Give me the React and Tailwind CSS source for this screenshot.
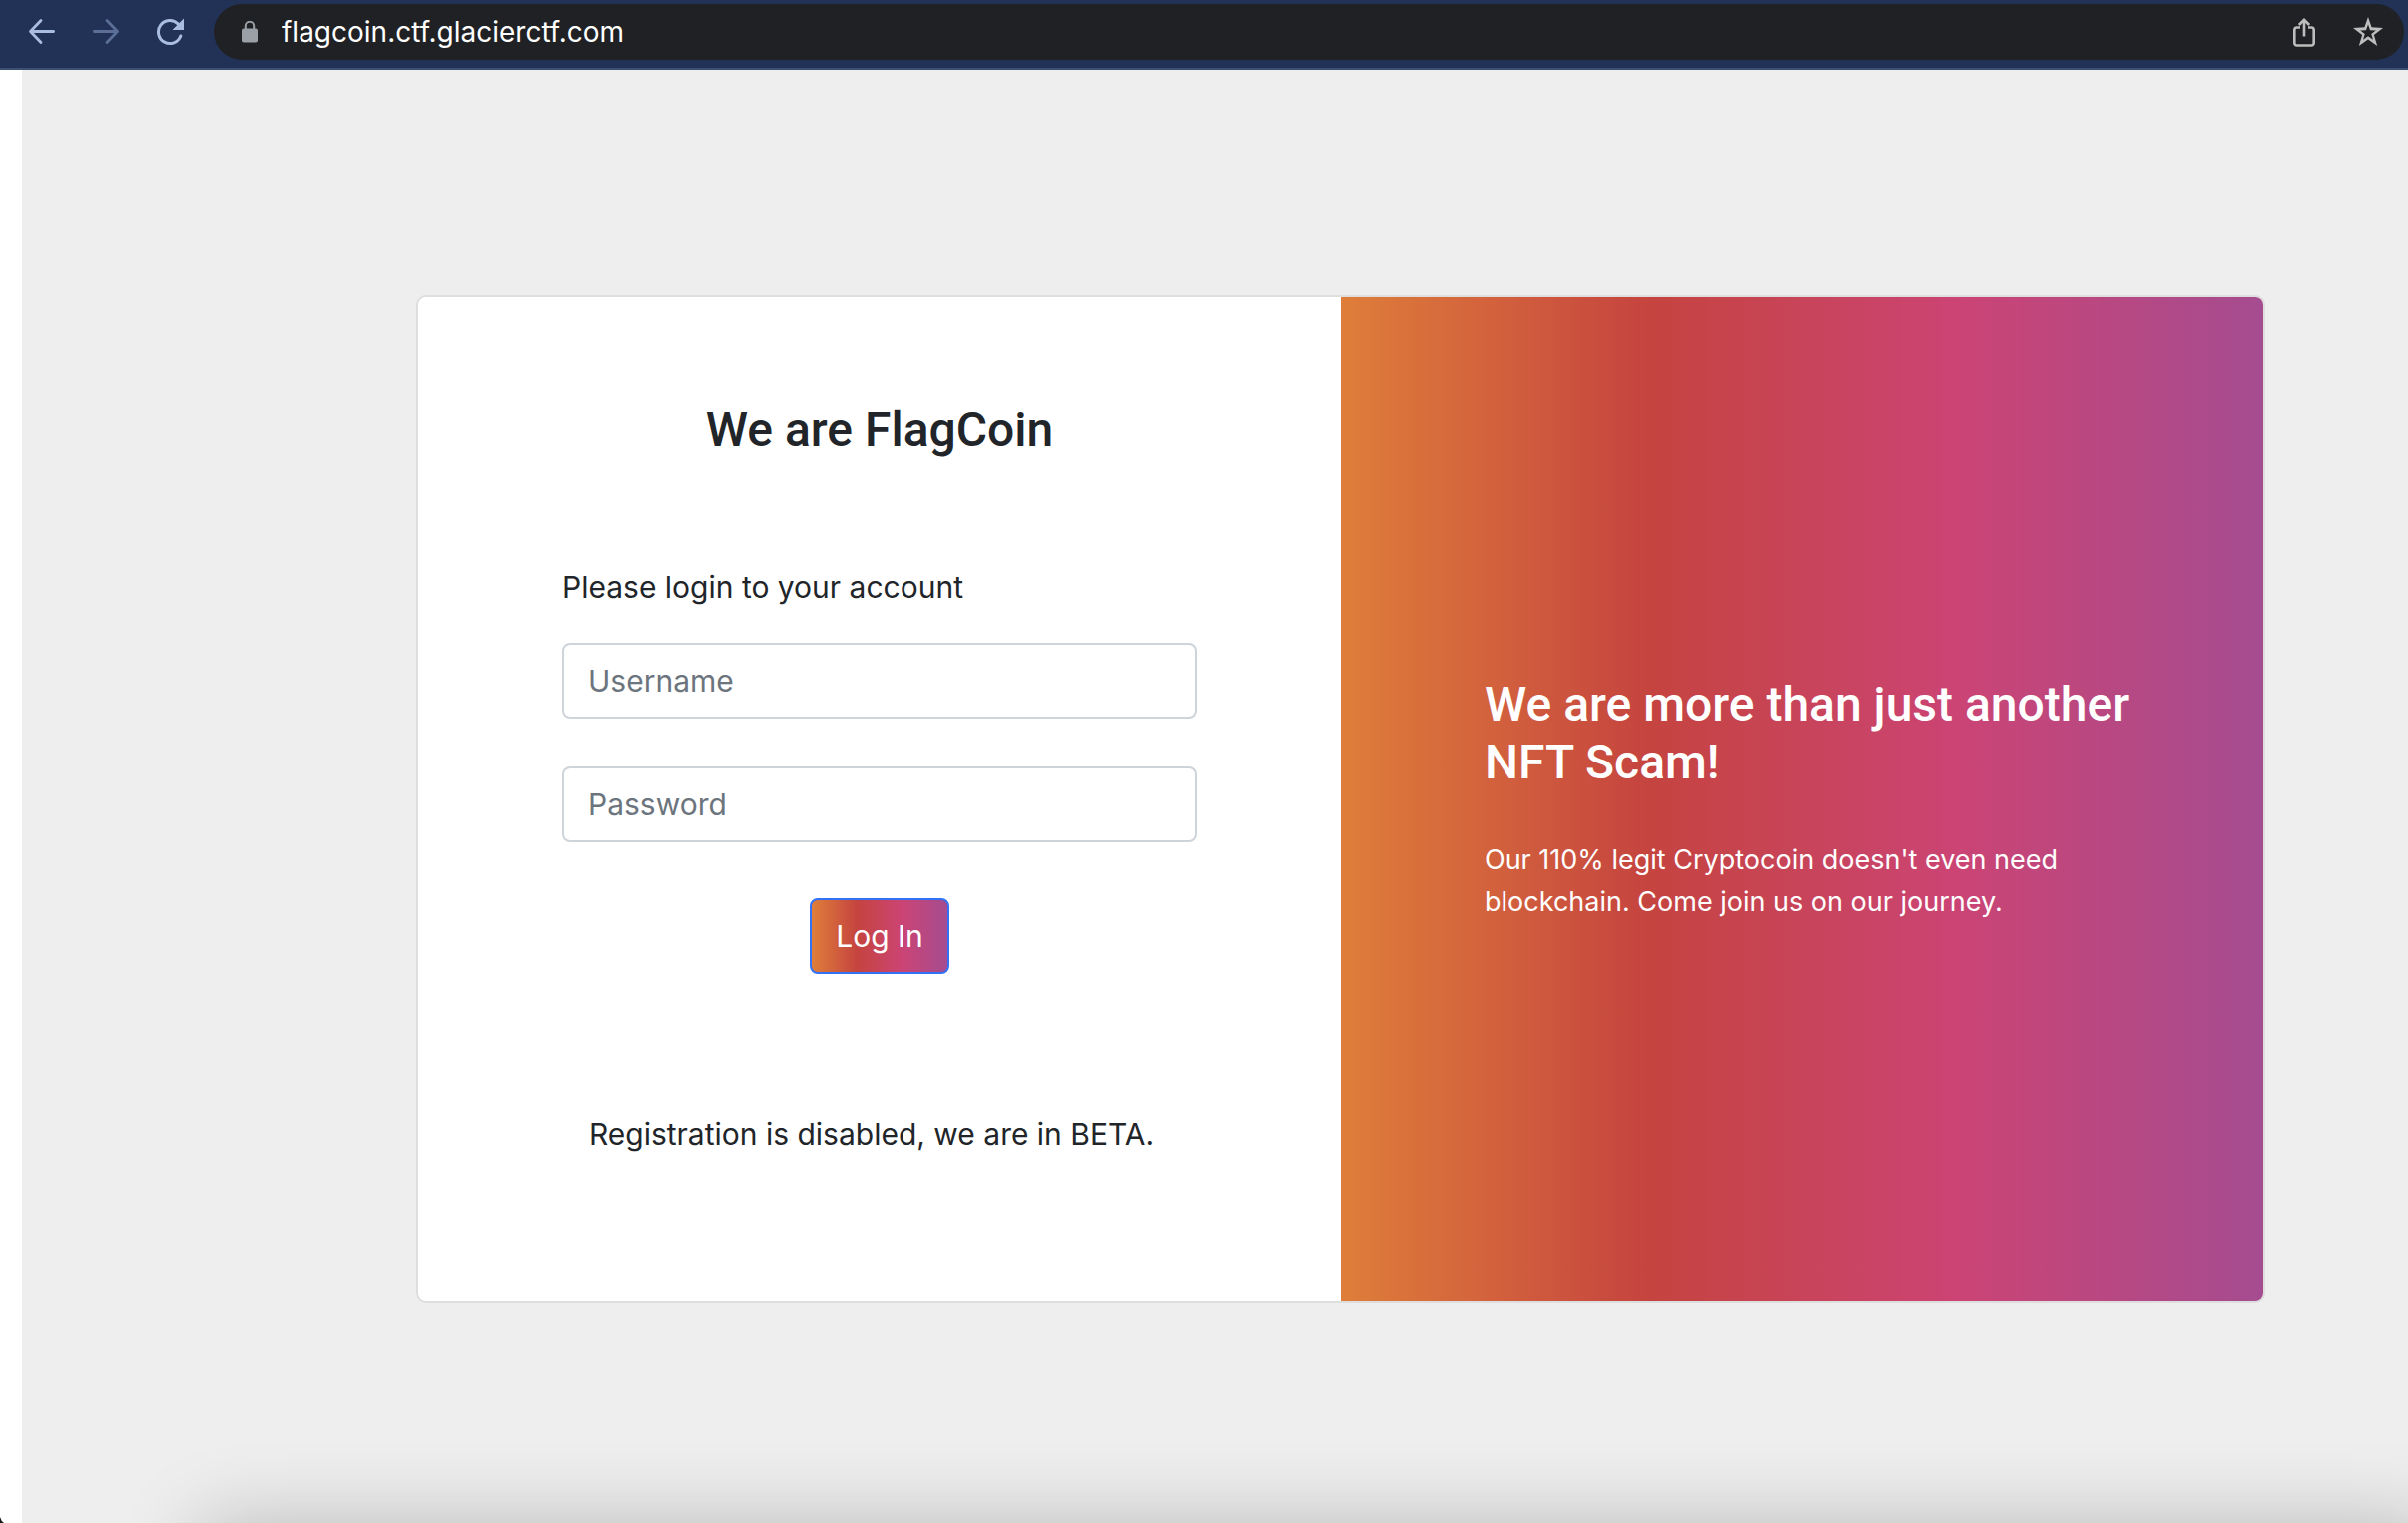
function BackIcon() {
  return (
    <svg viewBox="0 0 28 28" className="size-7" fill="none" stroke="currentColor" strokeWidth="2.8" aria-hidden="true">
      <path d="M25.6 13.500H3M13 2.500L2.500 13.500L13 24.500" strokeLinecap="round" strokeLinejoin="round" />
    </svg>
  );
}

function ForwardIcon() {
  return (
    <svg viewBox="0 0 28 28" className="size-7" fill="none" stroke="currentColor" strokeWidth="2.8" aria-hidden="true">
      <path d="M2.400 13.500H25M15 2.500L25.500 13.500L15 24.500" strokeLinecap="round" strokeLinejoin="round" />
    </svg>
  );
}

function ReloadIcon() {
  return (
    <svg viewBox="0 0 28 28" className="size-7" fill="none" aria-hidden="true">
      <path d="M24.800 18A11.500 11.500 0 1 1 22.100 5.900" stroke="currentColor" strokeWidth="3" strokeLinecap="round" />
      <path d="M28 0.500V12H16.500Z" fill="currentColor" />
    </svg>
  );
}

function LockIcon() {
  return (
    <svg viewBox="0 0 16 22" className="h-[22px] w-4 text-[#9aa0a6]" aria-hidden="true">
      <rect x="0" y="7.5" width="16" height="14" rx="2" fill="currentColor" />
      <path d="M3.800 8.500V5A4.200 4.200 0 0 1 12.200 5V8.500" fill="none" stroke="currentColor" strokeWidth="2" />
    </svg>
  );
}

function ShareIcon() {
  return (
    <svg viewBox="0 0 24 30" className="h-[30px] w-6" fill="none" stroke="currentColor" strokeWidth="2.600" aria-hidden="true">
      <path d="M8 10.500H4.800A2.500 2.500 0 0 0 2.300 13V26A2.500 2.500 0 0 0 4.800 28.500H19.200A2.500 2.500 0 0 0 21.700 26V13A2.500 2.500 0 0 0 19.200 10.500H16" />
      <path d="M12 19.500V3M6.800 8L12 2.800L17.200 8" />
    </svg>
  );
}

function StarIcon() {
  return (
    <svg viewBox="0 0 30 30" className="size-[30px]" fill="currentColor" fillRule="evenodd" aria-hidden="true">
      <path d="M15 0L18.600 10.300L30 10.900L20.900 18L24.200 29L15 22.600L5.800 29L9.100 18L0 10.900L11.400 10.300ZM15 7.500L13 13.200L7.200 13.400L11.800 16.900L10 22.700L15 19.300L20 22.700L18.200 16.900L22.800 13.400L17 13.200Z" />
    </svg>
  );
}

const inputClass =
  "h-[76px] w-full rounded-lg border-2 border-[#ced4da] bg-white px-6 text-[30px] text-[#212529] placeholder:text-[#6c757d] placeholder:opacity-100";

const headingClass = "font-['Roboto','Liberation_Sans',sans-serif] text-[48px] leading-[58px] font-medium";

const instaGradient = "bg-[linear-gradient(to_right,#df7e3a,#c5443f,#cb4474,#a54c90)]";

function BrowserBar() {
  return (
    <header className="flex h-[70px] items-start border-b-2 border-[#3c4f75] bg-[#213256] pt-1 pr-1">
      <nav className="flex h-14 items-center gap-9 pr-[30px] pl-7 text-[#a9bde0]">
        <button type="button" aria-label="Back"><BackIcon /></button>
        <button type="button" aria-label="Forward" className="text-[#5b6f96]"><ForwardIcon /></button>
        <button type="button" aria-label="Reload"><ReloadIcon /></button>
      </nav>
      <div className="flex h-14 min-w-0 flex-1 items-center rounded-full bg-[#202124] pr-[21px] pl-7 text-[#bdbdbd]">
        <LockIcon />
        <input
          type="text"
          aria-label="Address"
          defaultValue="flagcoin.ctf.glacierctf.com"
          className="ml-6 min-w-0 flex-1 bg-transparent text-[28px] leading-10 text-white outline-none"
        />
        <div className="flex items-center gap-[37px]">
          <button type="button" aria-label="Share"><ShareIcon /></button>
          <button type="button" aria-label="Bookmark"><StarIcon /></button>
        </div>
      </div>
    </header>
  );
}

function LoginForm() {
  return (
    <section className="px-36 py-24">
      <h1 className={`mt-2 text-center ${headingClass}`}>We are FlagCoin</h1>
      <form className="mt-[104px] flex flex-col" onSubmit={(e) => e.preventDefault()}>
        <p className="mb-8 text-[30px] leading-[48px]">Please login to your account</p>
        <input type="text" aria-label="Username" placeholder="Username" className={inputClass} />
        <input type="password" aria-label="Password" placeholder="Password" className={`mt-12 ${inputClass}`} />
        <button
          type="submit"
          className={`mt-14 h-[76px] self-center rounded-lg border-2 border-[#3371f6] px-6 text-[30px] text-white ${instaGradient}`}
        >
          Log In
        </button>
        <p className="mt-[136px] mr-4 mb-12 text-center text-[30px] leading-[48px]">
          Registration is disabled, we are in BETA.
        </p>
      </form>
    </section>
  );
}

function Pitch() {
  return (
    <section className={`flex flex-col justify-center rounded-r-lg pr-24 pl-36 text-white ${instaGradient}`}>
      <h2 className={headingClass}>We are more than just another NFT Scam!</h2>
      <p className="mt-12 text-[27px] leading-[42px]">
        Our 110% legit Cryptocoin doesn't even need blockchain. Come join us on our journey.
      </p>
    </section>
  );
}

export default function App() {
  return (
    <div className="relative flex min-h-screen flex-col overflow-hidden bg-white font-['Inter','Liberation_Sans',sans-serif] text-[#212529]">
      <BrowserBar />
      <main className="ml-[22px] flex-1 bg-[#eeeeee] pt-[226px] pr-[143px] pb-[220px] pl-[395px]">
        <div className="grid grid-cols-2 rounded-[10px] border-2 border-[#dedede] bg-white">
          <LoginForm />
          <Pitch />
        </div>
      </main>
      <div className="pointer-events-none absolute top-full -right-8 left-[200px] h-40 shadow-[0_0_80px_rgba(0,0,0,0.22)]" />
      <svg viewBox="0 0 4 6" className="absolute bottom-0 left-0 h-1.5 w-1" aria-hidden="true">
        <path d="M0 0Q1 4 4 6H0Z" fill="#1a1a1a" />
      </svg>
    </div>
  );
}
